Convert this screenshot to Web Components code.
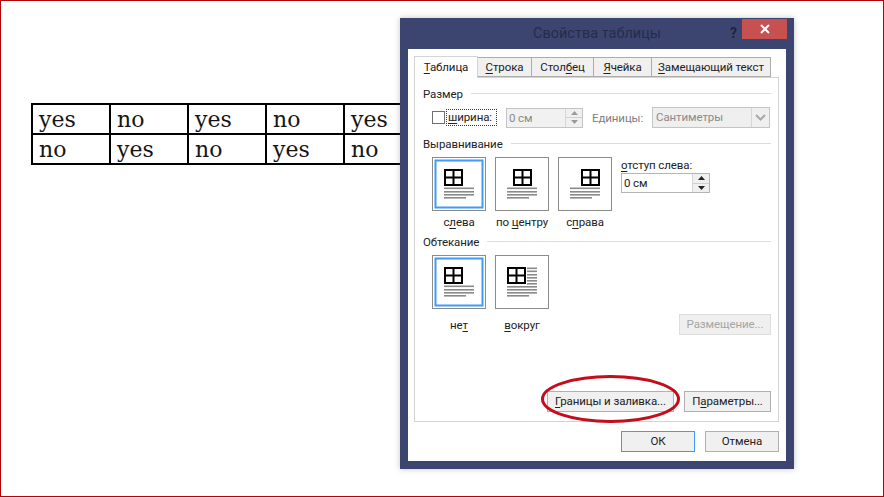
<!DOCTYPE html>
<html lang="ru">
<head>
<meta charset="utf-8">
<title>Свойства таблицы</title>
<style>
  html, body { margin: 0; padding: 0; background: #fff; }
  body { width: 884px; height: 497px; overflow: hidden; font-family: Roboto, sans-serif; }
  u { text-underline-offset: 2px; text-decoration-thickness: 1px; }
</style>
</head>
<body>
<slide-frame>
  <yes-no-table></yes-no-table>
  <table-dialog>
    <group-title>Размер</group-title>
    <size-row></size-row>

    <group-title gap="8">Выравнивание</group-title>
    <align-row></align-row>

    <group-title gap="4">Обтекание</group-title>
    <wrap-row></wrap-row>

    <panel-actions>
      <dlg-button><span><u>Г</u>раницы и заливка...</span></dlg-button>
      <dlg-button kind="params"><span>П<u>а</u>раметры...</span></dlg-button>
    </panel-actions>
  </table-dialog>
  <red-ellipse></red-ellipse>
</slide-frame>

<script>
// small helper, every element just sets its own shadow html
class Base extends HTMLElement {
  constructor() {
    super();
    this.attachShadow({ mode: 'open' }).innerHTML = this.render();
  }
  render() { return '<slot></slot>'; }
}

class SlideFrame extends Base {
  render() {
    return `<style>
      :host {
        display: block; position: relative; box-sizing: border-box;
        width: 884px; height: 497px; overflow: hidden;
        border: 1px solid #b00508; padding: 102px 0 0 30px;
      }
    </style><slot></slot>`;
  }
}

class YesNoTable extends Base {
  render() {
    const rows = [['yes', 'no', 'yes', 'no', 'yes'], ['no', 'yes', 'no', 'yes', 'no']];
    return `<style>
      :host { display: block; }
      table { border-collapse: collapse; table-layout: fixed; width: 390px; }
      td {
        border: 2px solid #000; height: 28px; padding: 0 0 0 6px; width: 70px;
        font: 22px/27px "DejaVu Serif", serif; color: #151515;
      }
    </style><table>${rows.map(r => `<tr>${r.map(c => `<td>${c}</td>`).join('')}</tr>`).join('')}</table>`;
  }
}

class TableDialog extends Base {
  render() {
    return `<style>
      :host {
        display: flex; flex-direction: column; position: absolute; box-sizing: border-box;
        left: 399px; top: 17px; width: 394px; height: 451px;
        background: #3c4570; padding: 0 8px 8px;
        box-shadow: 0 0 6px rgba(90,90,90,.35);
        font: 11.5px/16px Roboto, sans-serif; letter-spacing: -.1px; color: #222;
      }
      .title {
        flex: none; height: 31px; position: relative; text-align: center;
        font-size: 14.5px; line-height: 31px; letter-spacing: 0; color: #262c4c;
      }
      .help {
        position: absolute; left: 322px; top: 0; font-weight: 700; font-size: 14px; color: #20243f;
      }
      .close {
        position: absolute; left: 334px; top: 1px; width: 45px; height: 20px; background: #c75050;
        display: flex; align-items: center; justify-content: center;
      }
      .client {
        flex: 1; min-height: 0; background: #fff; padding: 7px 7px 9px 6px;
        display: flex; flex-direction: column;
      }
      .panel {
        flex: 1; min-height: 0; margin-top: -1px; border: 1px solid #d4d4d4; background: #fff;
        padding: 8px 7px 9px 8px; display: flex; flex-direction: column;
      }
      .footer { flex: none; display: flex; justify-content: flex-end; gap: 10px; padding-top: 9px; }
    </style>
    <div class="title">Свойства таблицы
      <span class="help">?</span>
      <span class="close"><svg width="10" height="10" viewBox="0 0 10 10"><path d="M1 1l8 8M9 1L1 9" stroke="#fff" stroke-width="2"/></svg></span>
    </div>
    <div class="client">
      <tab-strip></tab-strip>
      <div class="panel"><slot></slot></div>
      <div class="footer">
        <dlg-button kind="default">ОК</dlg-button>
        <dlg-button kind="wide">Отмена</dlg-button>
      </div>
    </div>`;
  }
}

class TabStrip extends Base {
  render() {
    const tabs = [
      ['<u>Т</u>аблица', 64], ['<u>С</u>трока', 54], ['Стол<u>б</u>ец', 62],
      ['<u>Я</u>чейка', 58], ['<u>З</u>амещающий текст', 119]
    ];
    return `<style>
      :host { display: flex; flex: none; height: 22px; align-items: flex-end; position: relative; z-index: 1; }
      .tab {
        box-sizing: border-box; height: 20px; border: 1px solid #acacac; border-left-width: 0;
        background: #f0f0f0; text-align: center; line-height: 19px; white-space: nowrap;
        margin-bottom: 1px;
      }
      .on {
        height: 22px; border: 1px solid #d4d4d4; border-bottom: 0; background: #fff; margin-bottom: 0;
        line-height: 21px;
      }
      u { text-underline-offset: 2px; }
    </style>${tabs.map(([t, w], i) => `<div class="tab ${i ? '' : 'on'}" style="width:${w}px">${t}</div>`).join('')}`;
  }
}

class GroupTitle extends Base {
  render() {
    const gap = this.getAttribute('gap') || 0;
    return `<style>
      :host { display: flex; align-items: center; gap: 8px; flex: none; height: 16px; margin-top: ${gap}px; color: #222; }
      i { flex: 1; height: 1px; background: #dcdcdc; margin-top: -2px; }
    </style><slot></slot><i></i>`;
  }
}

class NumBox extends Base {
  render() {
    const off = this.hasAttribute('disabled');
    const ink = off ? '#9a9a9a' : '#222';
    return `<style>
      :host {
        display: flex; flex: none; box-sizing: border-box; height: 20px; width: ${this.getAttribute('w')}px;
        border: 1px solid ${off ? '#c4c4c4' : '#b5b5b5'}; background: ${off ? '#f1f1f1' : '#fff'};
        color: ${off ? '#8a8a8a' : '#222'}; line-height: 18px;
      }
      span { flex: 1; padding-left: 2px; }
      .spin { flex: none; width: 16px; padding: 0; display: flex; flex-direction: column; border-left: 1px solid #d6d6d6; background: #f0f0f0; }
      .spin b { flex: 1; display: flex; align-items: center; justify-content: center; }
      .spin b + b { border-top: 1px solid #d0d0d0; }
      svg { display: block; fill: ${ink}; }
    </style><span>0 см</span><div class="spin">
      <b><svg width="7" height="4"><path d="M3.5 0L7 4H0z"/></svg></b>
      <b><svg width="7" height="4"><path d="M0 0h7L3.5 4z"/></svg></b>
    </div>`;
  }
}

class SizeRow extends Base {
  render() {
    return `<style>
      :host { display: flex; align-items: center; flex: none; height: 21px; margin-top: 5px; padding-left: 9px; }
      .check { flex: none; box-sizing: border-box; width: 13px; height: 13px; border: 1px solid #707070; background: #fff; }
      .lab { flex: none; box-sizing: border-box; margin-left: 2px; padding: 0 1px; outline: 1px dotted #333; outline-offset: 0; line-height: 15px; width: 49px; white-space: nowrap; }
      num-box { margin-left: 10px; }
      .unit { flex: none; margin-left: 9px; width: 60px; color: #808080; white-space: nowrap; }
      .select {
        flex: none; box-sizing: border-box; display: flex; width: 118px; height: 21px; line-height: 19px;
        border: 1px solid #c4c4c4; background: #efefef; color: #8a8a8a; padding-left: 3px;
      }
      .select span { flex: 1; }
      .select b { flex: none; width: 17px; border-left: 1px solid #d6d6d6; display: flex; align-items: center; justify-content: center; }
      u { text-underline-offset: 2px; }
    </style>
    <div class="check"></div>
    <div class="lab"><u>ш</u>ирина:</div>
    <num-box w="77" disabled></num-box>
    <div class="unit">Единицы:</div>
    <div class="select"><span>Сантиметры</span><b><svg width="11" height="7"><path d="M1 1l4.5 4.5L10 1" fill="none" stroke="#a8a8a8" stroke-width="2"/></svg></b></div>`;
  }
}

class LayoutChoice extends Base {
  render() {
    const tableX = { left: 12, center: 18, right: 23, none: 12, around: 12 }[this.getAttribute('icon')];
    const icon = this.getAttribute('icon');
    const on = this.hasAttribute('selected');
    let lines = '';
    [30.5, 34, 37, 40].forEach((y, i) => {
      lines += `<rect x="12" y="${y}" width="${i === 3 ? 22 : 30}" height="1.6"/>`;
    });
    if (icon === 'around') {
      lines = '';
      [12.5, 15.5, 19, 22, 25, 28].forEach(y => { lines += `<rect x="32" y="${y}" width="10" height="1.6"/>`; });
      [31, 34, 37, 40].forEach((y, i) => {
        lines += `<rect x="12" y="${y}" width="${i === 3 ? 22 : 30}" height="1.6"/>`;
      });
    }
    return `<style>
      :host { display: flex; flex-direction: column; align-items: center; flex: none; width: 54px; }
      .box { position: relative; box-sizing: border-box; width: 54px; height: 54px; border: 1px solid #8c8c8c; background: #fff; }
      .box svg { position: absolute; left: -1px; top: -1px; display: block; }
      .cap { margin-top: var(--cap-gap, 3px); height: 16px; white-space: nowrap; color: #222; }
    </style>
    <div class="box"><svg width="54" height="54" viewBox="0 0 54 54">
      ${on ? '<rect x="3.5" y="3.5" width="47" height="47" fill="none" stroke="#3f9cf5" stroke-width="2"/>' : ''}
      <g fill="#8a8a8a">${lines}</g>
      <path fill="none" stroke="#000" stroke-width="2" d="M${tableX + 1} 13h17v15h-17zM${tableX + 1} 20.5h17M${tableX + 9.5} 13v15"/>
    </svg></div>
    <div class="cap"><slot></slot></div>`;
  }
}

class AlignRow extends Base {
  render() {
    return `<style>
      :host { display: flex; flex: none; gap: 9px; margin-top: 5px; padding-left: 9px; height: 73px; }
      .indent { width: 90px; }
      .indent div { height: 16px; white-space: nowrap; }
      u { text-underline-offset: 2px; }
    </style>
    <layout-choice icon="left" selected>с<u>л</u>ева</layout-choice>
    <layout-choice icon="center">по <u>ц</u>ентру</layout-choice>
    <layout-choice icon="right">с<u>п</u>рава</layout-choice>
    <div class="indent"><div><u>о</u>тступ слева:</div><num-box w="89"></num-box></div>`;
  }
}

class WrapRow extends Base {
  render() {
    return `<style>
      :host { display: flex; flex: none; gap: 9px; margin-top: 5px; padding-left: 9px; height: 79px; --cap-gap: 8px; }
      dlg-button { margin-left: auto; align-self: flex-end; margin-bottom: -1px; }
      u { text-underline-offset: 2px; }
    </style>
    <layout-choice icon="none" selected>не<u>т</u></layout-choice>
    <layout-choice icon="around"><u>в</u>округ</layout-choice>
    <dlg-button kind="off">Размещение...</dlg-button>`;
  }
}

class PanelActions extends Base {
  render() {
    return `<style>
      :host { display: flex; flex: none; justify-content: flex-end; gap: 10px; margin-top: auto; }
    </style><slot></slot>`;
  }
}

class DlgButton extends Base {
  render() {
    const kind = this.getAttribute('kind');
    const w = { default: 74, wide: 74, off: 92, params: 87 }[kind] || 127;
    const border = kind === 'default' ? '#3f9cf5' : kind === 'off' ? '#dedede' : '#b0b0b0';
    return `<style>
      :host {
        display: flex; align-items: center; justify-content: center; flex: none; box-sizing: border-box;
        width: ${w}px; height: 21px; border: 1px solid ${border}; padding-bottom: 1px;
        background: ${kind === 'off' ? '#efefef' : '#f0f0f0'}; color: ${kind === 'off' ? '#a6a6a6' : '#222'};
        white-space: nowrap;
      }
      ::slotted(span) { display: block; }
    </style><slot></slot>`;
  }
}

class RedEllipse extends Base {
  render() {
    return `<style>
      :host { position: absolute; left: 538px; top: 373px; width: 144px; height: 52px; pointer-events: none; }
      svg { display: block; }
    </style><svg width="144" height="52" viewBox="0 0 144 52">
      <ellipse cx="71.5" cy="25" rx="68" ry="22.5" fill="none" stroke="#c40d1a" stroke-width="3"/>
    </svg>`;
  }
}

customElements.define('dlg-button', DlgButton);
customElements.define('num-box', NumBox);
customElements.define('layout-choice', LayoutChoice);
customElements.define('tab-strip', TabStrip);
customElements.define('group-title', GroupTitle);
customElements.define('size-row', SizeRow);
customElements.define('align-row', AlignRow);
customElements.define('wrap-row', WrapRow);
customElements.define('panel-actions', PanelActions);
customElements.define('table-dialog', TableDialog);
customElements.define('yes-no-table', YesNoTable);
customElements.define('red-ellipse', RedEllipse);
customElements.define('slide-frame', SlideFrame);
</script>
</body>
</html>
